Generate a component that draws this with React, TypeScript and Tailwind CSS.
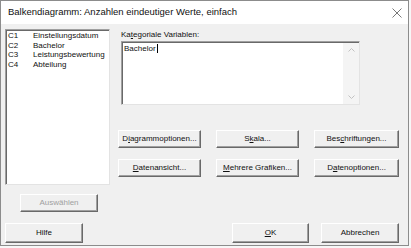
import React from "react";

const F = { fontFamily: '"Liberation Sans", Arial, sans-serif' };

function Btn({ children, w, disabled }: { children: React.ReactNode; w: string; disabled?: boolean }) {
  return (
    <div
      className={`${w} h-[18px] flex items-center justify-center bg-[#f0f0f0] border-t border-l border-t-white border-l-white border-r border-b border-r-[#696969] border-b-[#696969] shadow-[inset_-1px_-1px_0_#a0a0a0] text-[8px] leading-none ${disabled ? "text-[#a0a0a0]" : "text-[#111]"}`}
    >
      {children}
    </div>
  );
}

function U({ children }: { children: React.ReactNode }) {
  return <span className="underline underline-offset-[1px]">{children}</span>;
}

export default function App() {
  const rows = [
    ["C1", "Einstellungsdatum"],
    ["C2", "Bachelor"],
    ["C3", "Leistungsbewertung"],
    ["C4", "Abteilung"],
  ];
  return (
    <div className="w-[411px] h-[248px] bg-[#f7f7f7] overflow-hidden" style={F}>
      <div className="w-[409px] h-[246px] border border-[#8c8c8c] flex flex-col bg-[#f0f0f0]">
        {/* title bar */}
        <div className="h-[23px] bg-white flex items-center justify-between pl-[7px] pr-[6px]">
          <span className="text-[9.5px] text-[#111]">Balkendiagramm: Anzahlen eindeutiger Werte, einfach</span>
          <svg width="10" height="10" viewBox="0 0 10 10" className="mt-[1px]">
            <path d="M0.5 0.5 L9.5 9.5 M9.5 0.5 L0.5 9.5" stroke="#555" strokeWidth="0.8" />
          </svg>
        </div>
        {/* body */}
        <div className="flex-1 flex flex-col text-[8px] text-[#111]">
          <div className="flex pl-[4px] pt-[5px]">
            {/* left column */}
            <div className="w-[105px] flex flex-col">
              <div className="h-[156px] bg-white border-t border-l border-t-[#a0a0a0] border-l-[#a0a0a0] border-r border-b border-r-[#e3e3e3] border-b-[#e3e3e3] shadow-[inset_1px_1px_0_#696969] pl-[2px] pt-[1px]">
                {rows.map(([c, n]) => (
                  <div key={c} className="flex h-[9.7px] items-center leading-none">
                    <span className="w-[25px]">{c}</span>
                    <span>{n}</span>
                  </div>
                ))}
              </div>
              <div className="mt-[9px] ml-[15px]">
                <Btn w="w-[78px]" disabled>
                  Auswählen
                </Btn>
              </div>
            </div>
            {/* right column */}
            <div className="flex flex-col ml-[8px]">
              <div className="ml-[3px] h-[12px] flex items-center leading-none">
                Ka<U>t</U>egoriale Variablen:
              </div>
              <div className="ml-[3px] w-[239px] h-[64px] bg-white border-t border-l border-t-[#a0a0a0] border-l-[#a0a0a0] border-r border-b border-r-[#e3e3e3] border-b-[#e3e3e3] shadow-[inset_1px_1px_0_#696969] flex">
                <div className="flex-1 pl-[2px] pt-[3px] leading-none flex items-start">
                  <span>Bachelor</span>
                  <span className="w-px h-[9px] bg-black ml-[1px] -mt-[1px]" />
                </div>
                <div className="w-[16px] mt-[1px] bg-[#f4f4f4] flex flex-col items-center justify-between py-[5px]">
                  <svg width="7" height="4" viewBox="0 0 7 4">
                    <path d="M0.5 3.5 L3.5 0.5 L6.5 3.5" stroke="#c2c2c2" fill="none" strokeWidth="1" />
                  </svg>
                  <svg width="7" height="4" viewBox="0 0 7 4">
                    <path d="M0.5 0.5 L3.5 3.5 L6.5 0.5" stroke="#c2c2c2" fill="none" strokeWidth="1" />
                  </svg>
                </div>
              </div>
              <div className="mt-[25px] grid grid-cols-[83px_83px_85px] gap-x-[15px] gap-y-[11px]">
                <Btn w="w-[83px]">
                  D<U>i</U>agrammoptionen...
                </Btn>
                <Btn w="w-[83px]">
                  S<U>k</U>ala...
                </Btn>
                <Btn w="w-[85px]">
                  Bes<U>c</U>hriftungen...
                </Btn>
                <Btn w="w-[83px]">
                  <U>D</U>atenansicht...
                </Btn>
                <Btn w="w-[83px]">
                  <U>M</U>ehrere Grafiken...
                </Btn>
                <Btn w="w-[85px]">
                  D<U>a</U>tenoptionen...
                </Btn>
              </div>
            </div>
          </div>
          {/* bottom row */}
          <div className="flex pl-[4px] mt-[11px]">
            <Btn w="w-[78px] !h-[20px]">Hilfe</Btn>
            <div className="ml-[149px]">
              <Btn w="w-[77px] !h-[20px]">
                <U>O</U>K
              </Btn>
            </div>
            <div className="ml-[12px]">
              <Btn w="w-[78px] !h-[20px]">Abbrechen</Btn>
            </div>
          </div>
        </div>
      </div>
    </div>
  );
}
